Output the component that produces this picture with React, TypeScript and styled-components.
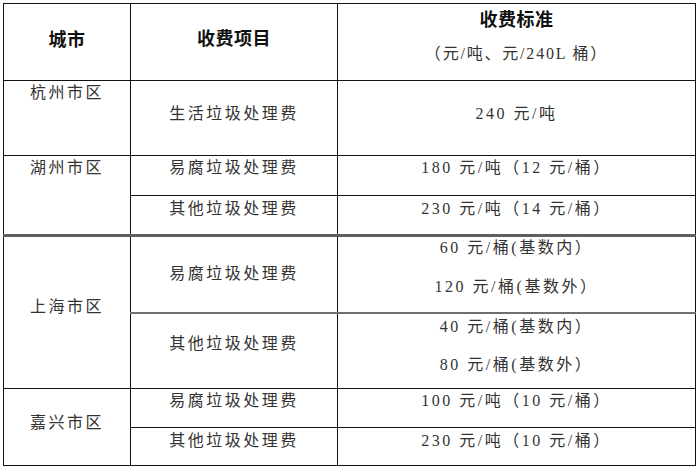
import React from 'react';
import styled, { createGlobalStyle } from 'styled-components';

const GlobalStyle = createGlobalStyle`
  html, body {
    margin: 0;
    padding: 0;
    background: #ffffff;
  }
`;

type Sep = 'thin' | 'thick' | 'gray';
type VAlign = 'top' | 'middle';

interface Fee {
  item: string;
  prices: string[];
  height: number;
  itemValign: VAlign;
  itemPad: string;
  priceValign: VAlign;
  pricePad: string;
  gap?: number;
  sep?: Sep;
}

interface CityGroup {
  city: string;
  valign: VAlign;
  pad: string;
  sep: Sep;
  fees: Fee[];
}

const groups: CityGroup[] = [
  {
    city: '杭州市区',
    valign: 'top',
    pad: '0',
    sep: 'thin',
    fees: [
      {
        item: '生活垃圾处理费',
        prices: ['240 元/吨'],
        height: 75,
        itemValign: 'middle',
        itemPad: '0 0 9px',
        priceValign: 'middle',
        pricePad: '0 0 9px',
      },
    ],
  },
  {
    city: '湖州市区',
    valign: 'top',
    pad: '0',
    sep: 'thin',
    fees: [
      {
        item: '易腐垃圾处理费',
        prices: ['180 元/吨（12 元/桶）'],
        height: 40,
        itemValign: 'top',
        itemPad: '0',
        priceValign: 'top',
        pricePad: '0',
      },
      {
        item: '其他垃圾处理费',
        prices: ['230 元/吨（14 元/桶）'],
        height: 40,
        itemValign: 'top',
        itemPad: '1px 0 0',
        priceValign: 'top',
        pricePad: '1px 0 0',
        sep: 'thin',
      },
    ],
  },
  {
    city: '上海市区',
    valign: 'middle',
    pad: '0 0 12px',
    sep: 'thick',
    fees: [
      {
        item: '易腐垃圾处理费',
        prices: ['60 元/桶(基数内）', '120 元/桶(基数外）'],
        height: 77,
        itemValign: 'middle',
        itemPad: '0',
        priceValign: 'top',
        pricePad: '0',
        gap: 17,
      },
      {
        item: '其他垃圾处理费',
        prices: ['40 元/桶(基数内）', '80 元/桶(基数外）'],
        height: 76,
        itemValign: 'middle',
        itemPad: '0 0 14px',
        priceValign: 'top',
        pricePad: '2px 0 0',
        gap: 16,
        sep: 'gray',
      },
    ],
  },
  {
    city: '嘉兴市区',
    valign: 'middle',
    pad: '0 0 8px',
    sep: 'thin',
    fees: [
      {
        item: '易腐垃圾处理费',
        prices: ['100 元/吨（10 元/桶）'],
        height: 39,
        itemValign: 'top',
        itemPad: '0',
        priceValign: 'top',
        pricePad: '0',
      },
      {
        item: '其他垃圾处理费',
        prices: ['230 元/吨（10 元/桶）'],
        height: 38,
        itemValign: 'top',
        itemPad: '1px 0 0',
        priceValign: 'top',
        pricePad: '1px 0 0',
        sep: 'thin',
      },
    ],
  },
];

const App: React.FC = () => {
  return (
    <>
      <GlobalStyle />
      <Page>
        <Table>
          <colgroup>
            <col style={{ width: 127 }} />
            <col style={{ width: 207 }} />
            <col style={{ width: 358 }} />
          </colgroup>
          <thead>
            <tr style={{ height: 77 }}>
              <HeadCell $pad="0 0 8px">城市</HeadCell>
              <HeadCell $pad="0 0 10px">收费项目</HeadCell>
              <HeadCell $pad="0" $valign="top">
                <HeadLine>收费标准</HeadLine>
                <SubLine>（元/吨、元/240L 桶）</SubLine>
              </HeadCell>
            </tr>
          </thead>
          <tbody>
            {groups.map((g) =>
              g.fees.map((f, i) => (
                <tr key={g.city + f.item} style={{ height: f.height }}>
                  {i === 0 && (
                    <Cell
                      rowSpan={g.fees.length}
                      $valign={g.valign}
                      $pad={g.pad}
                      $sep={g.sep}
                    >
                      {g.city}
                    </Cell>
                  )}
                  <Cell
                    $valign={f.itemValign}
                    $pad={f.itemPad}
                    $sep={i === 0 ? g.sep : f.sep || 'thin'}
                  >
                    {f.item}
                  </Cell>
                  <Cell
                    $valign={f.priceValign}
                    $pad={f.pricePad}
                    $sep={i === 0 ? g.sep : f.sep || 'thin'}
                  >
                    <PriceList $gap={f.gap || 0}>
                      {f.prices.map((p) => (
                        <Price key={p}>{p}</Price>
                      ))}
                    </PriceList>
                  </Cell>
                </tr>
              ))
            )}
          </tbody>
        </Table>
      </Page>
    </>
  );
};

const Page = styled.div`
  padding: 3px 0 0 3px;
  width: 700px;
  box-sizing: border-box;
`;

const Table = styled.table`
  width: 692px;
  table-layout: fixed;
  border-collapse: collapse;
  border: 1.5px solid #111;
`;

const HeadCell = styled.th<{ $pad: string; $valign?: VAlign }>`
  border: 1.5px solid #111;
  padding: ${(p) => p.$pad};
  vertical-align: ${(p) => p.$valign || 'middle'};
  text-align: center;
  font-family: 'Noto Sans CJK SC', sans-serif;
  font-size: 18px;
  font-weight: 700;
  color: #111;
  letter-spacing: 0.5px;
`;

const HeadLine = styled.div`
  line-height: 28px;
`;

const SubLine = styled.div`
  margin-top: 8px;
  line-height: 28px;
  font-family: 'Liberation Serif', 'Noto Sans CJK SC', serif;
  font-size: 16px;
  font-weight: 400;
  letter-spacing: 1.8px;
  color: #333;
`;

const sepStyle = (s: Sep) =>
  s === 'thick' ? '3px solid #5f5f5f' : s === 'gray' ? '2px solid #6f6f6f' : '1.5px solid #111';

const Cell = styled.td<{ $valign: VAlign; $pad: string; $sep: Sep }>`
  border: 1.5px solid #111;
  border-top: ${(p) => sepStyle(p.$sep)};
  padding: ${(p) => p.$pad};
  vertical-align: ${(p) => p.$valign};
  text-align: center;
  font-family: 'Liberation Serif', 'Noto Sans CJK SC', serif;
  font-size: 16px;
  font-weight: 400;
  line-height: 24px;
  letter-spacing: 2.5px;
  color: #333;
`;

const PriceList = styled.div<{ $gap: number }>`
  display: flex;
  flex-direction: column;
  align-items: center;
  gap: ${(p) => p.$gap}px;
  padding-top: ${(p) => (p.$gap ? '0' : '1px')};
`;

const Price = styled.div`
  line-height: 22px;
  white-space: nowrap;
`;

export default App;
